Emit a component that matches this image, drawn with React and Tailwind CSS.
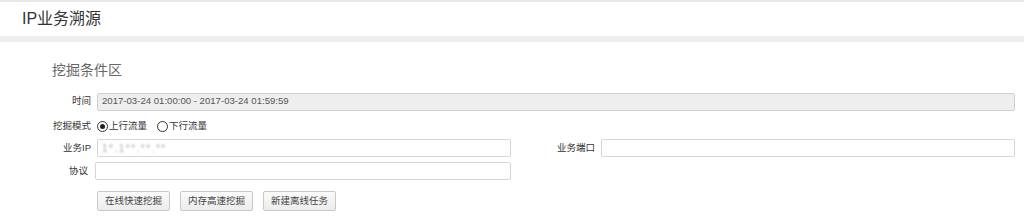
import React from "react";

function Radio({ checked, label }) {
  return (
    <label className="flex items-center gap-[1px]">
      <span className="w-[11px] h-[11px] rounded-full border border-[#333] bg-white flex items-center justify-center">
        {checked && <span className="w-[5px] h-[5px] rounded-full bg-[#222]" />}
      </span>
      <span>{label}</span>
    </label>
  );
}

function Label({ children, className = "" }) {
  return <div className={"w-[91px] text-right shrink-0 " + className}>{children}</div>;
}

function Btn({ children }) {
  return (
    <button className="h-[20px] w-[73px] border border-[#c8c8c8] rounded-[2px] bg-gradient-to-b from-[#fafafa] to-[#ececec] text-[9.5px] text-[#444] leading-none">
      {children}
    </button>
  );
}

export default function App() {
  return (
    <div
      className="w-[1024px] h-[222px] bg-white overflow-hidden border-t-2 border-[#e8e8e8]"
      style={{ fontFamily: '"Liberation Sans", "Noto Sans CJK SC", sans-serif' }}
    >
      <div className="h-[34px] flex items-center pl-[22px] text-[16px] text-[#333]">IP业务溯源</div>
      <div className="h-[6px] bg-[#eeeeee]" />
      <div className="text-[9.5px] text-[#333]">
        <div className="pl-[52px] pt-[18px] h-[50px] text-[14px] text-[#666] leading-[20px]">挖掘条件区</div>
        <div className="flex items-center h-[19px]">
          <Label>时间</Label>
          <div className="ml-[6px] w-[918px] h-[18px] bg-[#eeeeee] border border-[#d0d0d0] rounded-[2px] flex items-center pl-[4px] text-[#555] text-[9.6px]">
            2017-03-24 01:00:00 - 2017-03-24 01:59:59
          </div>
        </div>
        <div className="flex items-center h-[16px] mt-[7px]">
          <Label>挖掘模式</Label>
          <div className="ml-[6px] flex items-center gap-[10px]">
            <Radio checked label="上行流量" />
            <Radio label="下行流量" />
          </div>
        </div>
        <div className="flex items-center h-[18px] mt-[5px]">
          <Label>业务IP</Label>
          <div className="ml-[6px] w-[414px] h-[18px] border border-[#d5d5d5] rounded-[2px] flex items-center pl-[4px]">
            <span className="text-[#aab] blur-[1.2px] tracking-[1.5px] text-[10px]">1*.1**.**.**</span>
          </div>
          <div className="w-[84px] text-right shrink-0">业务端口</div>
          <div className="ml-[6px] w-[414px] h-[18px] border border-[#d5d5d5] rounded-[2px]" />
        </div>
        <div className="flex items-center h-[18px] mt-[5px]">
          <Label className="pr-[3px]">协议</Label>
          <div className="ml-[4px] w-[416px] h-[18px] border border-[#d5d5d5] rounded-[2px]" />
        </div>
        <div className="flex items-center mt-[11px] pl-[97px] gap-[10px]">
          <Btn>在线快速挖掘</Btn>
          <Btn>内存高速挖掘</Btn>
          <Btn>新建离线任务</Btn>
        </div>
      </div>
    </div>
  );
}
